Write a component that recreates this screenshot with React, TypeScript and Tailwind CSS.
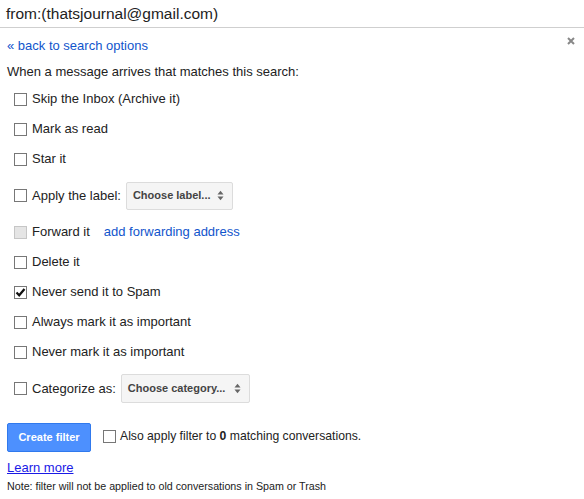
import React from 'react';

type BoxProps = { checked?: boolean; disabled?: boolean };

const Box: React.FC<BoxProps> = ({ checked, disabled }) => (
  <span
    className={`h-[13px] w-[13px] shrink-0 border flex items-center justify-center ${
      disabled ? 'bg-[#e5e5e5] border-[#c6c6c6]' : 'bg-white border-[#777]'
    }`}
  >
    {checked && (
      <svg width="11" height="11" viewBox="0 0 11 11">
        <path d="M1.5 5.5 L4.2 8.3 L9.5 2" fill="none" stroke="#111" strokeWidth="2.2" />
      </svg>
    )}
  </span>
);

const Arrows = () => (
  <svg width="7" height="11" viewBox="0 0 7 11" className="shrink-0">
    <path d="M0.5 4.5 L3.5 0.8 L6.5 4.5 Z" fill="#666" />
    <path d="M0.5 6.5 L3.5 10.2 L6.5 6.5 Z" fill="#666" />
  </svg>
);

const SelectBox: React.FC<{ label: string; w: string; h: string }> = ({ label, w, h }) => (
  <div
    className={`${w} ${h} flex items-center justify-between pl-[6px] pr-[8px] bg-[#f5f5f5] border border-[#dcdcdc] rounded-[2px] text-[11px] font-bold text-[#444]`}
  >
    <span>{label}</span>
    <Arrows />
  </div>
);

const Row: React.FC<{ children: React.ReactNode; tall?: boolean }> = ({ children, tall }) => (
  <div className={`flex items-center gap-[5px] pl-[14px] ${tall ? 'h-[43px]' : 'h-[30px]'}`}>{children}</div>
);

const App: React.FC = () => {
  return (
    <div
      className="w-[584px] h-[499px] bg-white text-[#222] text-[13px] overflow-hidden"
      style={{ fontFamily: '"Liberation Sans", Arial, sans-serif' }}
    >
      {/* search header */}
      <div className="h-[28px] border-b border-[#cfcfcf] pl-[6px] flex items-center text-[15.5px] text-[#222]">
        from:(thatsjournal@gmail.com)
      </div>

      <div className="flex justify-between items-start pl-[7px] pr-[9px] pt-[8px] h-[35px]">
        <span className="text-[#15c]">« back to search options</span>
        <svg width="8" height="8" viewBox="0 0 8 8" className="mt-[1px]">
          <path d="M1 1 L7 7 M7 1 L1 7" stroke="#888" strokeWidth="2" />
        </svg>
      </div>

      <div className="pl-[7px] h-[21px] leading-[18px]">When a message arrives that matches this search:</div>

      <Row><Box /><span>Skip the Inbox (Archive it)</span></Row>
      <Row><Box /><span>Mark as read</span></Row>
      <Row><Box /><span>Star it</span></Row>
      <Row tall>
        <Box /><span>Apply the label:</span>
        <SelectBox label="Choose label..." w="w-[107px]" h="h-[28px]" />
      </Row>
      <Row>
        <Box disabled /><span>Forward it</span>
        <span className="ml-[9px] text-[#15c]">add forwarding address</span>
      </Row>
      <Row><Box /><span>Delete it</span></Row>
      <Row><Box checked /><span>Never send it to Spam</span></Row>
      <Row><Box /><span>Always mark it as important</span></Row>
      <Row><Box /><span>Never mark it as important</span></Row>
      <Row tall>
        <Box /><span>Categorize as:</span>
        <SelectBox label="Choose category..." w="w-[129px]" h="h-[29px]" />
      </Row>

      <div className="flex items-start pl-[7px] mt-[13px]">
        <button className="w-[84px] h-[29px] bg-[#4d90fe] border border-[#3079ed] rounded-[2px] text-white text-[11px] font-bold">
          Create filter
        </button>
        <div className="flex items-center gap-[4px] ml-[12px] mt-[4px] text-[12.2px]">
          <Box />
          <span>Also apply filter to <b>0</b> matching conversations.</span>
        </div>
      </div>

      <div className="pl-[7px] mt-[8px] leading-[16px]">
        <span className="text-[#1a1ae6] underline">Learn more</span>
      </div>
      <div className="pl-[7px] mt-[3px] text-[10.7px] leading-[14px] text-[#222]">
        Note: filter will not be applied to old conversations in Spam or Trash
      </div>
    </div>
  );
};

export default App;
